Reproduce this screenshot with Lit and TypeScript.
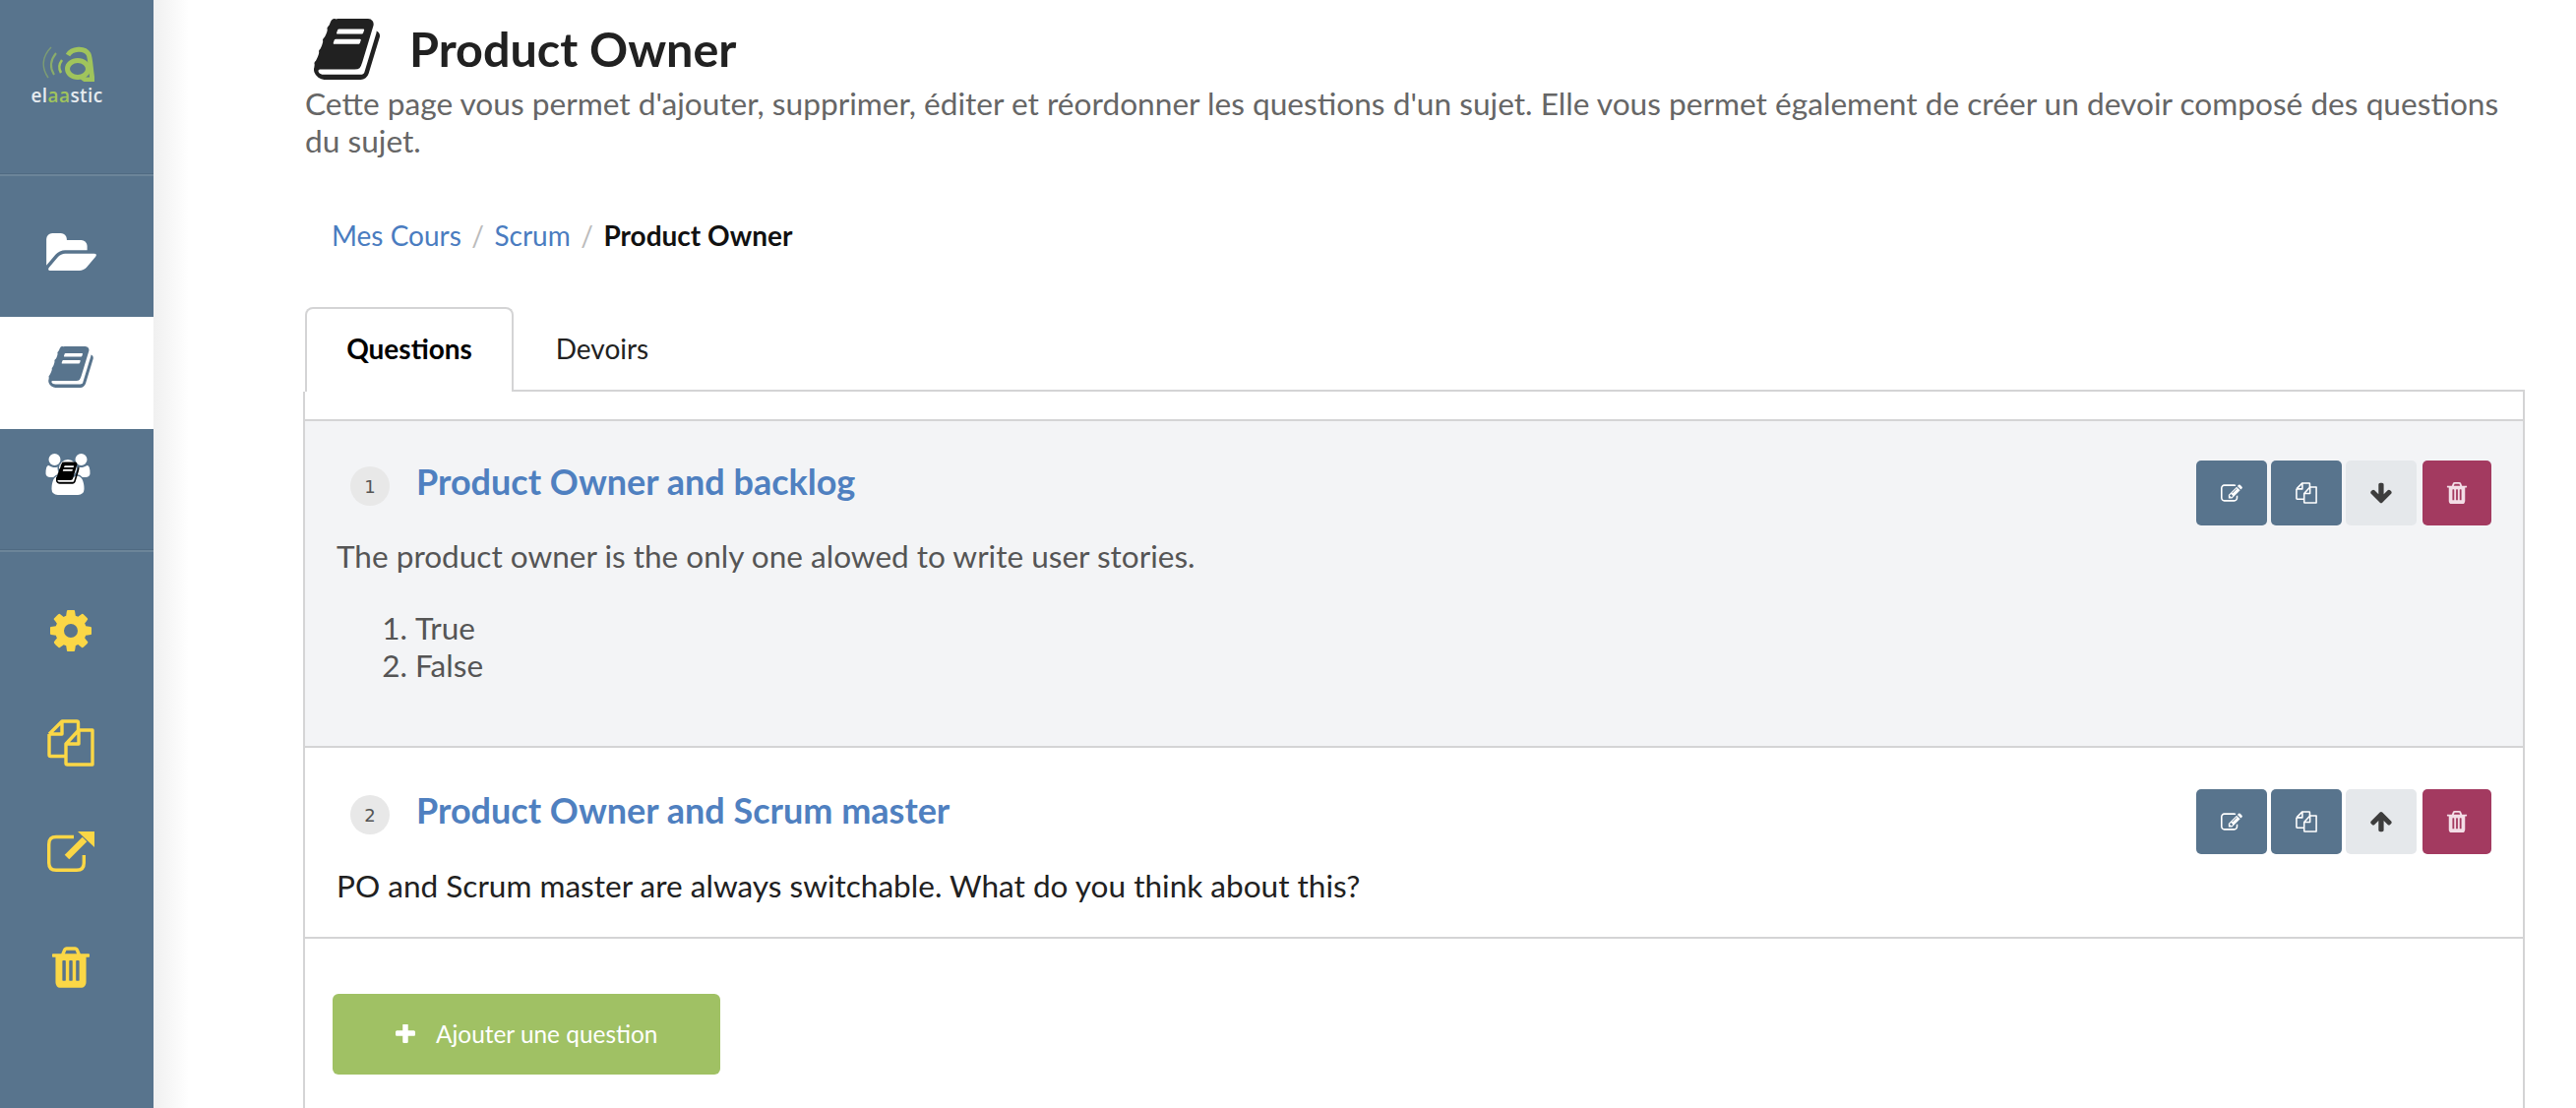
import { css, html, LitElement, svg } from "lit";
import { customElement } from "lit/decorators.js";

const BOOK = "M1639 478q40 57 18 129l-275 906q-19 64-76.500 107.500t-122.500 43.500h-923q-77 0-148.500-53.500t-99.500-131.500q-24-67-2-127 0-4 3-27t4-37q1-8-3-21.500t-3-19.500q2-11 8-21t16.500-23.500 16.500-23.500q23-38 45-91.500t30-91.500q3-10 .5-30t-.5-28q3-11 17-28t17-23q21-36 42-92t25-90q1-9-2.500-32t.5-28q4-13 22-30.500t22-22.500q19-26 42.500-84.500t27.500-96.500q1-8-3-25.500t-2-26.500q2-8 9-18t18-23 17-21q8-12 16.500-30.500t15-35 16-36 19.500-32 26.500-23.500 36-11.500 47.500 5.500l-1 3q38-9 51-9h761q74 0 114 56t18 130l-274 906q-36 119-71.500 153.500t-128.500 34.500h-869q-27 0-38 15-11 16-1 43 24 70 144 70h923q29 0 56-15.500t35-41.500l300-987q7-22 5-57 38 15 59 43zm-1064 2q-4 13 2 22.500t20 9.500h608q13 0 25.500-9.500t16.500-22.500l21-64q4-13-2-22.500t-20-9.500h-608q-13 0-25.500 9.500t-16.500 22.500zm-83 256q-4 13 2 22.500t20 9.500h608q13 0 25.500-9.500t16.500-22.500l21-64q4-13-2-22.500t-20-9.500h-608q-13 0-25.500 9.500t-16.500 22.500z";
const FOLDER = "M1815 952q0 31-31 66l-336 396q-43 51-120.500 86.500t-143.500 35.500h-1088q-34 0-60.500-13t-26.500-43q0-31 31-66l336-396q43-51 120.500-86.500t143.500-35.500h1088q34 0 60.500 13t26.500 43zm-343-344v160h-832q-94 0-197 47.500t-164 119.500l-337 396-5 6q0-4-.5-12.500t-.5-12.500v-960q0-92 66-158t158-66h320q92 0 158 66t66 158v32h544q92 0 158 66t66 158z";
const USERS = "M593 896q-162 5-265 128h-134q-82 0-138-40.500t-56-118.500q0-353 124-353 6 0 43.500 21t97.500 42.500 119 21.500q67 0 133-23-5 37-5 66 0 139 81 256zm1071 637q0 120-73 189.500t-194 69.500h-874q-121 0-194-69.500t-73-189.500q0-53 3.500-103.500t14-109 26.500-108.500 43-97.500 62-81 85.500-53.500 111.500-20q10 0 43 21.500t73 48 107 48 135 21.500 135-21.500 107-48 73-48 43-21.500q61 0 111.500 20t85.500 53.500 62 81 43 97.500 26.500 108.500 14 109 3.500 103.500zm-1024-1277q0 106-75 181t-181 75-181-75-75-181 75-181 181-75 181 75 75 181zm704 384q0 159-112.500 271.500t-271.500 112.500-271.500-112.500-112.500-271.500 112.500-271.500 271.500-112.500 271.500 112.500 112.500 271.500zm576 225q0 78-56 118.500t-138 40.500h-134q-103-123-265-128 81-117 81-256 0-29-5-66 66 23 133 23 59 0 119-21.500t97.500-42.500 43.500-21q124 0 124 353zm-128-609q0 106-75 181t-181 75-181-75-75-181 75-181 181-75 181 75 75 181z";
const COG = "M1152 896q0-106-75-181t-181-75-181 75-75 181 75 181 181 75 181-75 75-181zm512-109v222q0 12-8 23t-20 13l-185 28q-19 54-39 91 35 50 107 138 10 12 10 25t-9 23q-27 37-99 108t-94 71q-12 0-26-9l-138-108q-44 23-91 38-16 136-29 186-7 28-36 28h-222q-14 0-24.500-8.500t-11.500-21.500l-28-184q-49-16-90-37l-141 107q-10 9-25 9-14 0-25-11-126-114-165-168-7-10-7-23 0-12 8-23 15-21 51-66.500t54-70.500q-27-50-41-99l-183-27q-13-2-21-12.500t-8-23.500v-222q0-12 8-23t19-13l186-28q14-46 39-92-40-57-107-138-10-12-10-24 0-10 9-23 26-36 98.500-107.500t94.500-71.500q13 0 26 10l138 107q44-23 91-38 16-136 29-186 7-28 36-28h222q14 0 24.500 8.500t11.500 21.500l28 184q49 16 90 37l142-107q9-9 24-9 13 0 25 10 129 119 165 170 7 8 7 22 0 12-8 23-15 21-51 66.500t-54 70.500q26 50 41 98l183 28q13 2 21 12.500t8 23.500z";
const TRASH = "M704 1376v-704q0-14-9-23t-23-9h-64q-14 0-23 9t-9 23v704q0 14 9 23t23 9h64q14 0 23-9t9-23zm256 0v-704q0-14-9-23t-23-9h-64q-14 0-23 9t-9 23v704q0 14 9 23t23 9h64q14 0 23-9t9-23zm256 0v-704q0-14-9-23t-23-9h-64q-14 0-23 9t-9 23v704q0 14 9 23t23 9h64q14 0 23-9t9-23zm-544-992h448l-48-117q-7-9-17-11h-317q-10 2-17 11zm928 32v64q0 14-9 23t-23 9h-96v948q0 83-47 143.500t-113 60.500h-832q-66 0-113-58.500t-47-141.500v-952h-96q-14 0-23-9t-9-23v-64q0-14 9-23t23-9h309l70-167q15-37 54-63t79-26h320q40 0 79 26t54 63l70 167h309q14 0 23 9t9 23z";
const EDIT = "M888 1184l116-116-152-152-116 116v56h96v96h56zm440-720q-16-16-33 1l-350 350q-17 17-1 33t33-1l350-350q17-17 1-33zm80 594v190q0 119-84.500 203.500t-203.500 84.500h-832q-119 0-203.500-84.500t-84.500-203.500v-832q0-119 84.500-203.500t203.500-84.500h832q63 0 117 25 15 7 18 23 3 17-9 29l-49 49q-14 14-32 8-23-6-45-6h-832q-66 0-113 47t-47 113v832q0 66 47 113t113 47h832q66 0 113-47t47-113v-126q0-13 9-22l64-64q15-15 35-7t20 29zm-96-738l288 288-672 672h-288v-288zm444 132l-92 92-288-288 92-92q28-28 68-28t68 28l152 152q28 28 28 68t-28 68z";
const DOWN = "M1675 832q0 53-37 90l-651 652q-39 37-91 37-53 0-90-37l-651-652q-38-36-38-90 0-53 38-91l74-75q39-37 91-37 53 0 90 37l294 294v-704q0-52 38-90t90-38h128q52 0 90 38t38 90v704l294-294q37-37 90-37 52 0 91 37l75 75q37 39 37 91z";
const UP = "M1675 971q0 51-37 90l-75 75q-38 38-91 38-54 0-90-38l-294-293v704q0 52-37.500 84.500t-90.500 32.500h-128q-53 0-90.500-32.500t-37.500-84.500v-704l-294 293q-36 38-90 38t-90-38l-75-75q-38-38-38-90 0-53 38-91l651-651q35-37 90-37 54 0 91 37l651 651q37 39 37 91z";
const PLUS = "M1600 736v192q0 40-28 68t-68 28h-416v416q0 40-28 68t-68 28h-192q-40 0-68-28t-28-68v-416h-416q-40 0-68-28t-28-68v-192q0-40 28-68t68-28h416v-416q0-40 28-68t68-28h192q40 0 68 28t28 68v416h416q40 0 68 28t28 68z";

// viewBox cropped to the painted part of each glyph
const icon = (d: string, box: string) => html`
  <svg viewBox=${box} fill="currentColor"><path d=${d}></path></svg>
`;

const copyIcon = html`
  <svg viewBox="0 0 48 48" fill="none" stroke="currentColor" stroke-width="3.4" stroke-linejoin="round">
    <path d="M2 15 L15 2 H30 Q31.500 2 31.500 3.500 V11 M2 15 V36 Q2 37.500 3.500 37.500 H18 M2 15 H15 V2"></path>
    <path d="M19 25 L32 11 H46 V46 H20.500 Q19 46 19 44.500 Z M19 25 H32 V11" fill="none"></path>
  </svg>
`;

const externalIcon = html`
  <svg viewBox="0 0 48 41" fill="none" stroke="currentColor">
    <path d="M27 5.500 H9 Q1.700 5.500 1.700 13 V32 Q1.700 39.300 9 39.300 H30 Q37.300 39.300 37.300 32 V24" stroke-width="3.400"></path>
    <path d="M20 26 L38 8" stroke-width="6.500"></path>
    <path d="M31 0 H48 V16 Z" fill="currentColor" stroke="none"></path>
  </svg>
`;

const groupIcon = svg`
  <svg class="group" viewBox="0 0 1920 1792">
    <path fill="#fff" d=${USERS}></path>
    <svg x="440" y="290" width="1020" height="1100" viewBox="0 100 1664 1600">
      <path fill="#000" d=${BOOK}></path>
    </svg>
  </svg>
`;

const logo = html`
  <svg class="logo-mark" viewBox="0 0 54 36" fill="none" stroke="#a0c45c">
    <path d="M7 32 C-1 20 2 9 10 1" stroke-width="1.600" opacity=".5"></path>
    <path d="M13 29 C8 21 10 13 15 7" stroke-width="2" opacity=".7"></path>
    <path d="M20 27 C17 22 18 18 21 14" stroke-width="2.500"></path>
    <path d="M27 9 C31 2 44 1 48 8 C50 12 50 24 52 34 H46 C43 34 41 31 40 29" stroke-width="5"></path>
    <ellipse cx="37" cy="23" rx="10.500" ry="8.500" stroke-width="5"></ellipse>
  </svg>
`;

interface Question {
  n: number;
  title: string;
  body: string;
  options?: string[];
  dir: "up" | "down";
}

const QUESTIONS: Question[] = [
  {
    n: 1,
    title: "Product Owner and backlog",
    body: "The product owner is the only one alowed to write user stories.",
    options: ["True", "False"],
    dir: "down",
  },
  {
    n: 2,
    title: "Product Owner and Scrum master",
    body: "PO and Scrum master are always switchable. What do you think about this?",
    dir: "up",
  },
];

@customElement("app-root")
export class AppRoot extends LitElement {
  static override styles = css`
    :host {
      display: flex;
      height: 100vh;
      overflow: hidden;
      background: #fff;
      font-family: Lato, "Liberation Sans", sans-serif;
      color: #212121;
    }

    .sidebar {
      flex: 0 0 156px;
      background: #58748d;
      display: flex;
      flex-direction: column;
    }
    .logo {
      height: 176px;
      box-sizing: border-box;
      padding: 47px 20px 0 0;
      display: flex;
      flex-direction: column;
      align-items: center;
    }
    .logo-mark {
      width: 54px;
      height: 36px;
      margin-left: 2px;
    }
    .logo-text {
      font-family: "Open Sans", sans-serif;
      font-size: 19px;
      line-height: 24px;
      letter-spacing: 0.4px;
      font-weight: 600;
      color: #e6ebef;
      margin-top: 2px;
    }
    .logo-text b {
      font-weight: 600;
      color: #a0c45c;
    }
    .sep {
      height: 3px;
      flex: none;
      background: linear-gradient(#4f6a82 0 1px, #6c8599 1px 100%);
    }
    .nav {
      height: 114px;
      flex: none;
      box-sizing: border-box;
      padding: 30px 12px 0 0;
      display: flex;
      justify-content: center;
      color: #fff;
    }
    .nav.first {
      margin-top: 29px;
      padding-top: 29px;
    }
    .nav.last {
      height: 122px;
    }
    .nav.active {
      background: #fff;
      color: #58748d;
    }
    .nav svg {
      display: block;
    }
    .nav .folder {
      width: 51px;
      height: 38px;
    }
    .nav .book {
      width: 46px;
      height: 42px;
    }
    .group {
      width: 46px;
      height: 42px;
      margin: -5px 0 0 -7px;
    }
    .tool {
      height: 114px;
      flex: none;
      box-sizing: border-box;
      padding-right: 12px;
      display: flex;
      align-items: center;
      justify-content: center;
      color: #fbd746;
    }
    .tools {
      padding-top: 23px;
    }
    .tool .gear {
      width: 42px;
      height: 42px;
    }
    .tool .copy {
      width: 48px;
      height: 48px;
    }
    .tool .ext {
      width: 48px;
      height: 41px;
      margin-bottom: 8px;
    }
    .tool .bin {
      width: 38px;
      height: 42px;
    }

    .edge {
      flex: 0 0 36px;
      background: linear-gradient(90deg, #f0f0f0, #fff);
    }

    main {
      flex: 1;
      min-width: 0;
      padding: 0 52px 0 118px;
    }
    h1 {
      margin: 0;
      height: 86px;
      display: flex;
      align-items: center;
      padding: 0 0 0 9px;
      gap: 30px;
      font-size: 48.5px;
      font-weight: 700;
      line-height: 60px;
      color: #212121;
    }
    h1 svg {
      width: 67px;
      height: 62px;
      margin-top: 14px;
    }
    h1 span {
      margin-top: 12px;
    }
    .intro {
      margin: 0;
      font-size: 31.65px;
      line-height: 38px;
      color: #666;
    }
    .crumbs {
      margin: 59px 0 0 27px;
      display: flex;
      font-size: 28px;
      line-height: 36px;
      color: #4a7cc0;
    }
    .crumbs i {
      font-style: normal;
      color: #bbb;
      margin: 0 10.5px;
    }
    .crumbs b {
      color: #111;
    }
    .tabs {
      margin-top: 55px;
      height: 84px;
      display: flex;
      border-bottom: 2px solid #d4d4d5;
      font-size: 28px;
    }
    .tab {
      width: 212px;
      box-sizing: border-box;
      display: flex;
      align-items: center;
      justify-content: center;
      color: #222;
    }
    .tab.active {
      height: 86px;
      padding-bottom: 4px;
      border: 2px solid #d4d4d5;
      border-bottom: 0;
      border-radius: 8px 8px 0 0;
      background: #fff;
      font-weight: 700;
      color: #000;
    }
    .tab + .tab {
      width: 180px;
    }
    .panel {
      margin-left: -2px;
      height: 800px;
      border: 2px solid #d4d4d5;
      border-top: 0;
      padding-top: 28px;
    }
    .question {
      box-sizing: border-box;
      border-top: 2px solid #d4d4d5;
      padding: 48px 32px 0 32px;
      position: relative;
      height: 194px;
    }
    .question.tinted {
      background: #f3f4f6;
      height: 332px;
      padding-top: 46px;
    }
    .head {
      display: flex;
      align-items: center;
      padding-left: 14px;
      height: 40px;
      gap: 27px;
    }
    .num {
      width: 40px;
      height: 40px;
      border-radius: 50%;
      background: #e8e8e8;
      color: #555;
      display: flex;
      align-items: center;
      justify-content: center;
      font-family: "DejaVu Sans", sans-serif;
      font-size: 18px;
    }
    h2 {
      margin: -10px 0 0 0;
      font-size: 36px;
      font-weight: 700;
      line-height: 40px;
      color: #4f80c0;
    }
    .body {
      margin: 33px 0 0 0;
      font-size: 31.55px;
      line-height: 38px;
      color: #212121;
    }
    .tinted .body {
      margin-top: 32px;
      color: #555;
    }
    ol {
      margin: 35px 0 0 0;
      padding-left: 80px;
      font-size: 31.55px;
      line-height: 38px;
      color: #555;
    }
    .actions {
      position: absolute;
      top: 42px;
      right: 32px;
      display: flex;
      gap: 4px;
    }
    .tinted .actions {
      top: 40px;
    }
    .btn {
      width: 72px;
      height: 66px;
      border-radius: 5px;
      display: flex;
      align-items: center;
      justify-content: center;
      color: #fff;
      background: #58748d;
    }
    .btn svg {
      width: 22px;
      height: 22px;
    }
    .btn.move {
      background: #e5e8eb;
      color: #3d3d3d;
    }
    .btn.del {
      width: 70px;
      margin-left: 2px;
      background: #a33a60;
      color: #f3dde6;
    }
    .footer {
      border-top: 2px solid #d4d4d5;
      padding: 56px 0 0 28px;
    }
    .add {
      width: 394px;
      height: 82px;
      box-sizing: border-box;
      border-radius: 6px;
      background: #a0c164;
      color: #fff;
      display: flex;
      align-items: center;
      padding-left: 64px;
      gap: 21px;
      font-size: 24.4px;
    }
    .add svg {
      width: 20px;
      height: 20px;
    }
    .add span {
      margin-top: -2px;
    }
  `;

  private renderQuestion(q: Question) {
    return html`
      <section class="question ${q.options ? "tinted" : ""}">
        <div class="head">
          <span class="num">${q.n}</span>
          <h2>${q.title}</h2>
        </div>
        <p class="body">${q.body}</p>
        ${q.options
          ? html`<ol>${q.options.map((o) => html`<li>${o}</li>`)}</ol>`
          : null}
        <div class="actions">
          <span class="btn">${icon(EDIT, "0 128 1792 1408")}</span>
          <span class="btn">${copyIcon}</span>
          <span class="btn move">
            ${q.dir === "down" ? icon(DOWN, "100 128 1600 1480") : icon(UP, "100 184 1600 1480")}
          </span>
          <span class="btn del">${icon(TRASH, "192 128 1408 1536")}</span>
        </div>
      </section>
    `;
  }

  override render() {
    return html`
      <nav class="sidebar">
        <div class="logo">
          ${logo}
          <div class="logo-text">el<b>aa</b>stic</div>
        </div>
        <div class="sep"></div>
        <div class="nav first"><svg class="folder" viewBox="-64 128 1879 1408" fill="currentColor"><path d=${FOLDER}></path></svg></div>
        <div class="nav active"><svg class="book" viewBox="0 128 1664 1536" fill="currentColor"><path d=${BOOK}></path></svg></div>
        <div class="nav last">${groupIcon}</div>
        <div class="sep"></div>
        <div class="tools">
          <div class="tool"><svg class="gear" viewBox="128 128 1536 1536" fill="currentColor"><path d=${COG}></path></svg></div>
          <div class="tool"><span class="copy">${copyIcon}</span></div>
          <div class="tool"><span class="ext">${externalIcon}</span></div>
          <div class="tool"><svg class="bin" viewBox="192 128 1408 1536" fill="currentColor"><path d=${TRASH}></path></svg></div>
        </div>
      </nav>
      <div class="edge"></div>
      <main>
        <h1>
          <svg viewBox="0 128 1664 1536" fill="currentColor"><path d=${BOOK}></path></svg>
          <span>Product Owner</span>
        </h1>
        <p class="intro">
          Cette page vous permet d'ajouter, supprimer, éditer et réordonner les questions d'un sujet. Elle vous permet également de créer un devoir composé des questions du sujet.
        </p>
        <div class="crumbs">
          <span>Mes Cours</span><i>/</i><span>Scrum</span><i>/</i><b>Product Owner</b>
        </div>
        <div class="tabs">
          <div class="tab active">Questions</div>
          <div class="tab">Devoirs</div>
        </div>
        <div class="panel">
          ${QUESTIONS.map((q) => this.renderQuestion(q))}
          <div class="footer">
            <div class="add">${icon(PLUS, "192 192 1408 1408")}<span>Ajouter une question</span></div>
          </div>
        </div>
      </main>
    `;
  }
}

declare global {
  interface HTMLElementTagNameMap {
    "app-root": AppRoot;
  }
}
